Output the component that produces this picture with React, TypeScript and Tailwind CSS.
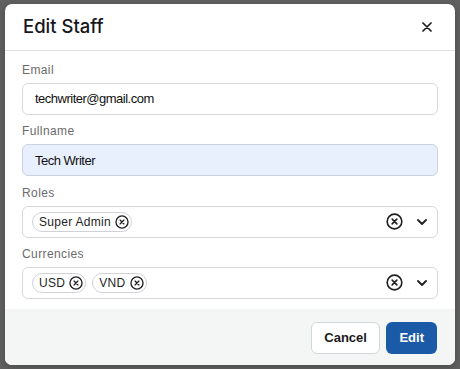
import type { ReactNode } from 'react';

function CircleX({ size, stroke = 1.6 }: { size: number; stroke?: number }) {
  return (
    <svg width={size} height={size} viewBox="0 0 16 16" fill="none" stroke="#1f1f1f" strokeWidth={stroke} strokeLinecap="round">
      <circle cx="8" cy="8" r="6.9" />
      <path d="M5.8 5.8l4.4 4.4M10.2 5.8l-4.4 4.4" />
    </svg>
  );
}

function Chip({ label }: { label: string }) {
  return (
    <div className="flex h-[20px] items-center gap-[4px] rounded-full border border-[#cfd3d8] pl-[6px] pr-[2px] text-[12px] tracking-[0.3px] text-[#1f1f1f]">
      <span>{label}</span>
      <CircleX size={14} stroke={1.5} />
    </div>
  );
}

function Field({ label, children }: { label: string; children: ReactNode }) {
  return (
    <div className="flex flex-col">
      <label className="mb-[5px] pt-[2px] text-[12px] leading-[15px] tracking-[0.4px] text-[#6b6b6b]">{label}</label>
      {children}
    </div>
  );
}

function MultiSelect({ values }: { values: string[] }) {
  return (
    <div className="flex h-[32px] items-center rounded-[6px] border border-[#d5d8dc] bg-white pl-[9px] pr-[10px]">
      <div className="flex flex-1 items-center gap-[6px]">
        {values.map((v) => (
          <Chip key={v} label={v} />
        ))}
      </div>
      <div className="flex items-center gap-[14px]">
        <CircleX size={17} stroke={1.5} />
        <svg width="10" height="6" viewBox="0 0 10 6" fill="none" stroke="#1f1f1f" strokeWidth={1.8} strokeLinecap="round" strokeLinejoin="round">
          <path d="M1 1l4 4 4-4" />
        </svg>
      </div>
    </div>
  );
}

export default function App() {
  return (
    <div className="h-[369px] w-[460px] overflow-hidden bg-[#616161] pl-[5px] pt-[4px] font-['Liberation_Sans',Arial,sans-serif]">
      <div className="flex h-[361px] w-[450px] flex-col overflow-hidden rounded-[7px] bg-white shadow-[0_2px_8px_rgba(0,0,0,0.25)]">
        <div className="flex h-[47px] shrink-0 items-center justify-between border-b border-[#dcdfe3] pl-[18px] pr-[23px]">
          <h2 className="font-['Inter',sans-serif] text-[18.5px] font-medium text-[#17171c]">Edit Staff</h2>
          <svg width="10" height="10" viewBox="0 0 10 10" fill="none" stroke="#1a1a1a" strokeWidth={1.7} strokeLinecap="round">
            <path d="M1 1l8 8M9 1L1 9" />
          </svg>
        </div>

        <div className="flex flex-col gap-[7.33px] px-[17px] pb-[10px] pt-[10px]">
          <Field label="Email">
            <div className="flex h-[32px] items-center rounded-[6px] border border-[#d5d8dc] bg-white pl-[12px] text-[13px] tracking-[-0.5px] text-[#111]">
              techwriter@gmail.com
            </div>
          </Field>
          <Field label="Fullname">
            <div className="flex h-[32px] items-center rounded-[6px] border border-[#ccd3de] bg-[#e8f0fe] pl-[12px] text-[13px] tracking-[-0.5px] text-[#111]">
              Tech Writer
            </div>
          </Field>
          <Field label="Roles">
            <MultiSelect values={['Super Admin']} />
          </Field>
          <Field label="Currencies">
            <MultiSelect values={['USD', 'VND']} />
          </Field>
        </div>

        <div className="flex flex-1 items-start justify-end gap-[6px] bg-[#f4f6f6] pr-[18px] pt-[13px]">
          <button className="h-[32px] rounded-[6px] border border-[#d3d6da] bg-white px-[12.5px] text-[13px] font-bold text-[#1a1a1a]">
            Cancel
          </button>
          <button className="h-[32px] rounded-[6px] bg-[#1b5aa6] px-[13px] text-[13px] font-bold text-white">
            Edit
          </button>
        </div>
      </div>
    </div>
  );
}
